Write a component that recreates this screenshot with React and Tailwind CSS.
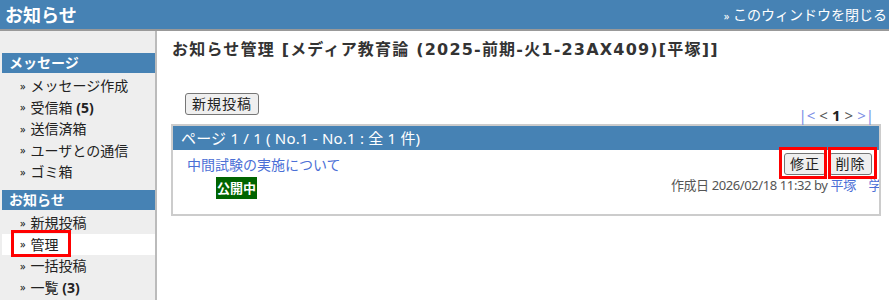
function SideHeader({ children, className = "" }) {
  return (
    <div className={`ml-[2px] h-[20px] bg-[#4682b4] text-white font-bold text-[14px] leading-[20px] pl-[7px] ${className}`}>
      {children}
    </div>
  );
}

function Item({ children, active, boxed }) {
  return (
    <div
      className={`relative ml-[2px] h-[21.5px] flex items-center pl-[18px] text-[14px] text-[#222] ${
        active ? "bg-white" : ""
      }`}
    >
      <span className="text-[11px] mr-[5px]">»</span>
      {children}
      {boxed && (
        <div className="absolute left-[9px] top-[-4px] w-[60px] h-[27px] border-[3px] border-[#f00]" />
      )}
    </div>
  );
}

export default function App() {
  return (
    <div className="w-[889px] h-[300px] overflow-hidden bg-white font-['Noto_Sans','Noto_Sans_CJK_JP',sans-serif] flex flex-col">
      <div className="h-[29px] shrink-0 box-content bg-[#4682b4] border-b-2 border-[#999] flex items-center justify-between pl-[5px] pr-[2px]">
        <span className="text-white font-bold text-[18px] leading-none">お知らせ</span>
        <span className="text-white text-[14px] leading-none">
          <span className="text-[11px]">»</span> このウィンドウを閉じる
        </span>
      </div>
      <div className="flex flex-1 min-h-0">
        <aside className="w-[155px] shrink-0 box-content bg-[#eee] border-r-2 border-[#bbb] pt-[22px]">
          <SideHeader>メッセージ</SideHeader>
          <div className="pt-[2px]">
            <Item>メッセージ作成</Item>
            <Item>
              受信箱&nbsp;<span className="font-bold">(5)</span>
            </Item>
            <Item>送信済箱</Item>
            <Item>ユーザとの通信</Item>
            <Item>ゴミ箱</Item>
          </div>
          <SideHeader className="mt-[7.5px]">お知らせ</SideHeader>
          <div className="pt-[2px]">
            <Item>新規投稿</Item>
            <Item active boxed>
              管理
            </Item>
            <Item>一括投稿</Item>
            <Item>
              一覧&nbsp;<span className="font-bold">(3)</span>
            </Item>
          </div>
        </aside>
        <main className="flex-1 min-w-0 pl-[14px] pr-[8px] pt-[7px]">
          <h1 className="font-['DejaVu_Sans','Noto_Sans_CJK_JP',sans-serif] text-[16px] font-bold leading-[24px] tracking-[1.2px] text-[#333] pl-[1px] whitespace-nowrap">
            お知らせ管理 [メディア教育論 (2025-前期-火1-23AX409)[平塚]]
          </h1>
          <div className="mt-[29px] pl-[14px] h-[22px]">
            <button className="h-[22px] px-[6px] text-[14px] leading-none tracking-[1px] text-[#222] bg-[#efefef] border border-[#767676] rounded-[3px]">
              新規投稿
            </button>
          </div>
          <div className="mt-[-7px] h-[18px] flex justify-end pr-[7px] text-[15px] leading-[18px] gap-[4px] whitespace-nowrap">
            <span className="text-[#7b8ee6]">|&lt;</span>
            <span className="text-[#555]">&lt;</span>
            <span className="font-bold text-[#222]">1</span>
            <span className="text-[#555]">&gt;</span>
            <span className="text-[#7b8ee6]">&gt;|</span>
          </div>
          <div className="border-2 border-[#ccc] overflow-hidden">
            <div className="h-[24px] bg-[#4682b4] text-white text-[15px] leading-[24px] pl-[8px] whitespace-nowrap tracking-[0.2px]">
              ページ 1 / 1 ( No.1 - No.1 : 全 1 件)
            </div>
            <div className="h-[64px] flex justify-between">
              <div className="pl-[14px] pt-[5px]">
                <div className="text-[14px] leading-[20px] text-[#4b6fd6]">中間試験の実施について</div>
                <div className="ml-[29px] mt-[-2px] inline-block h-[22px] bg-[#006400] text-white font-bold text-[13px] leading-[22px] px-[1px]">
                  公開中
                </div>
              </div>
              <div className="flex flex-col items-end pt-[1px] pr-[7px]">
                <div className="flex gap-[3px]">
                  <div className="relative">
                    <button className="h-[22px] w-[42px] text-[14px] leading-none tracking-[1px] text-[#222] bg-[#efefef] border border-[#767676] rounded-[3px]">
                      修正
                    </button>
                    <div className="absolute left-[-5px] top-[-4px] w-[48px] h-[32px] border-[3px] border-[#f00]" />
                  </div>
                  <div className="relative">
                    <button className="h-[22px] w-[43px] text-[14px] leading-none tracking-[1px] text-[#222] bg-[#efefef] border border-[#767676] rounded-[3px]">
                      削除
                    </button>
                    <div className="absolute left-[-1px] top-[-4px] w-[49px] h-[32px] border-[3px] border-[#f00]" />
                  </div>
                </div>
                <div className="mt-[1px] mr-[-9px] text-[13px] leading-[18px] tracking-[-0.4px] text-[#555] whitespace-nowrap">
                  作成日 2026/02/18 11:32 by <span className="text-[#4b6fd6]">平塚　学</span>
                </div>
              </div>
            </div>
          </div>
        </main>
      </div>
    </div>
  );
}
